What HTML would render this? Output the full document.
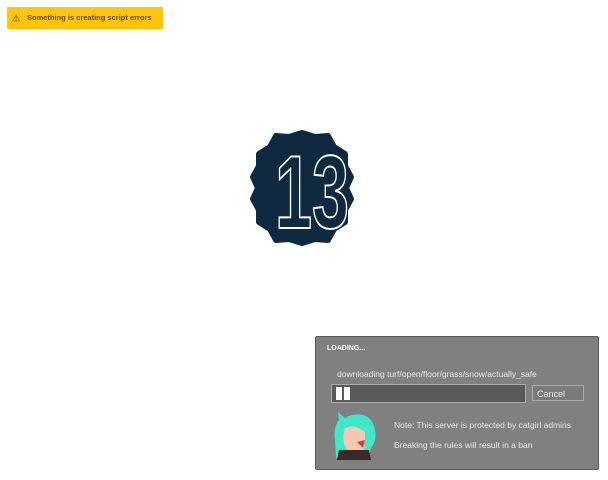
<!DOCTYPE html><html><head><style>
body{margin:0;width:608px;height:480px;background:#fff;position:relative;overflow:hidden;font-family:"Liberation Sans",sans-serif}
.ban{position:absolute;left:7px;top:7px;width:156px;height:22px;background:#fec50e;font-size:7.5px;font-weight:bold;color:#6b4a00;line-height:22px}
.dlg{position:absolute;left:315px;top:336px;width:282px;height:132px;background:#808080;border:1px solid #5a5a5a;border-radius:2px;color:#e8e8e8;font-size:8.5px}
.t{position:absolute;white-space:nowrap}
</style></head><body>
<div class="ban"><span style="position:absolute;left:5px;top:0;font-size:9px;color:#a07000">⚠</span><span style="position:absolute;left:20px">Something is creating script errors</span></div>
<svg style="position:absolute;left:0;top:0" width="608" height="480">
<polygon fill="#0f2a40" stroke="#0f2a40" stroke-width="6" stroke-linejoin="round" points="
302,133 315,137 328,136 334,147 345,154 345,166 351,177 346,188 351,199 345,210 345,222 334,229 328,240 315,239 302,243 289,239 276,240 270,229 259,222 259,210 253,199 258,188 253,177 259,166 259,154 270,147 276,136 289,137"/>
<text x="275" y="228" textLength="74" lengthAdjust="spacingAndGlyphs" font-family="Liberation Sans Narrow, Liberation Sans, sans-serif" font-weight="bold" font-size="104" fill="#0f2a40" stroke="#fff" stroke-width="2">13</text>
</svg>
<div class="dlg">
<div class="t" style="left:11px;top:8px;font-size:7px;font-weight:bold;color:#fff">LOADING...</div>
<div class="t" style="left:21px;top:32px">downloading turf/open/floor/grass/snow/actually_safe</div>
<div style="position:absolute;left:15px;top:47px;width:193px;height:17px;background:#5a5a5a;border:1px solid #aaa"></div>
<div style="position:absolute;left:20px;top:50px;width:6px;height:13px;background:#fff"></div>
<div style="position:absolute;left:28px;top:50px;width:6px;height:13px;background:#fff"></div>
<div style="position:absolute;left:216px;top:48px;width:52px;height:16px;background:#7a7a7a;border:1px solid #aaa;line-height:16px;padding-left:4px;box-sizing:border-box;font-size:9px">Cancel</div>
<svg style="position:absolute;left:15px;top:73px" width="48" height="50">
<path d="M5 48 L4 30 Q2 18 8 10 L7 2 L14 8 Q22 3 32 5 Q42 8 44 20 Q46 30 40 38 L38 48 Z" fill="#3ee8c8"/>
<path d="M14 18 Q24 14 34 22 L34 38 Q26 46 16 40 Q10 30 14 18Z" fill="#f5c9b0"/>
<path d="M8 40 L38 40 L40 50 L6 50Z" fill="#3a2a2a"/>
<path d="M26 32 L34 30 L32 38Z" fill="#c0405a"/>
</svg>
<div class="t" style="left:78px;top:83px">Note: This server is protected by catgirl admins</div>
<div class="t" style="left:78px;top:103px">Breaking the rules will result in a ban</div>
</div>
</body></html>
